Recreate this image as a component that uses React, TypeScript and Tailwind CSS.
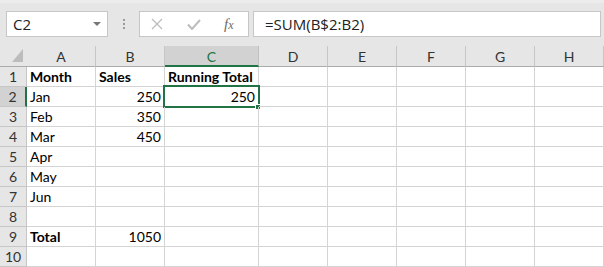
import { Fragment } from "react";

const COLS = ["A", "B", "C", "D", "E", "F", "G", "H"];

type Cell = { v: string; bold?: boolean; num?: boolean };

const ROWS: Record<number, Record<string, Cell>> = {
  1: {
    A: { v: "Month", bold: true },
    B: { v: "Sales", bold: true },
    C: { v: "Running Total", bold: true },
  },
  2: { A: { v: "Jan" }, B: { v: "250", num: true }, C: { v: "250", num: true } },
  3: { A: { v: "Feb" }, B: { v: "350", num: true } },
  4: { A: { v: "Mar" }, B: { v: "450", num: true } },
  5: { A: { v: "Apr" } },
  6: { A: { v: "May" } },
  7: { A: { v: "Jun" } },
  8: {},
  9: { A: { v: "Total", bold: true }, B: { v: "1050", num: true } },
  10: {},
};

function FormulaBar() {
  return (
    <div className="h-[46px] bg-[#e6e6e6] border-t-[3px] border-[#ececec]">
      <div className="flex items-center gap-0 pt-[8px] pl-[6px] pr-[3px]">
        <div className="flex h-[26px] w-[102px] items-center justify-between border border-[#c6c6c6] bg-white pl-[6px] pr-[6px] text-[15px] text-[#222]">
          <span>C2</span>
          <svg width="8" height="4" viewBox="0 0 8 4">
            <path d="M0 0h8L4 4z" fill="#777" />
          </svg>
        </div>
        <div className="flex w-[31px] flex-col items-center gap-[2px]">
          <span className="h-[2px] w-[2px] bg-[#9a9a9a]" />
          <span className="h-[2px] w-[2px] bg-[#9a9a9a]" />
          <span className="h-[2px] w-[2px] bg-[#9a9a9a]" />
        </div>
        <div className="flex h-[26px] w-[110px] items-center border border-[#c6c6c6] bg-white">
          <svg className="ml-[11px]" width="12" height="12" viewBox="0 0 12 12">
            <path d="M1 1l10 10M11 1L1 11" stroke="#bdbdbd" strokeWidth="1.3" />
          </svg>
          <svg className="ml-[24px]" width="14" height="11" viewBox="0 0 14 11">
            <path d="M1 5.5l4 4.5L13 1" stroke="#bdbdbd" strokeWidth="2" fill="none" />
          </svg>
          <span className="ml-[23px] font-['Liberation_Serif',serif] text-[15px] italic text-[#6b6b6b]">
            f<span className="text-[12px]">x</span>
          </span>
        </div>
        <div className="ml-[4px] flex h-[26px] flex-1 items-center border border-[#c6c6c6] bg-white pl-[11px] text-[15px] text-[#222]">
          =SUM(B$2:B2)
        </div>
      </div>
    </div>
  );
}

export default function App() {
  return (
    <div className="h-[267px] w-[604px] overflow-hidden bg-white font-['Lato',sans-serif] text-[14px] text-black">
      <div className="font-['Open_Sans',sans-serif]">
        <FormulaBar />
      </div>
      <div className="grid grid-cols-[27px_69px_69px_94px_69px_69px_69px_69px_69px] auto-rows-[20px] [grid-template-rows:21px]">
        <div className="relative border-b border-[#ababab] bg-[#e6e6e6]">
          <svg className="absolute left-[12px] top-[3px]" width="11" height="13" viewBox="0 0 11 13">
            <path d="M11 0v13H0z" fill="#bcbcbc" />
          </svg>
        </div>
        {COLS.map((c) => (
          <div
            key={c}
            className={
              c === "C"
                ? "flex items-center justify-center border-b-2 border-r border-b-[#217346] border-r-[#c0c0c0] bg-[#d2d2d2] pt-[2px] text-[#217346]"
                : "flex items-center justify-center border-b border-r border-b-[#ababab] border-r-[#c6c6c6] bg-[#e6e6e6] text-[#333]"
            }
          >
            {c}
          </div>
        ))}
        {Object.keys(ROWS).map((k) => {
          const r = Number(k);
          return (
            <Fragment key={r}>
              <div
                className={
                  r === 2
                    ? "flex items-center justify-center border-b border-r-2 border-b-[#c6c6c6] border-r-[#217346] bg-[#d2d2d2] text-[#333]"
                    : "flex items-center justify-center border-b border-r border-[#c6c6c6] bg-[#e6e6e6] text-[#333]"
                }
              >
                {r}
              </div>
              {COLS.map((c) => {
                const cell = ROWS[r][c];
                return (
                  <div
                    key={c}
                    className={
                      "relative flex items-center whitespace-nowrap border-b border-r border-[#d4d4d4] px-[3px] " +
                      (cell?.num ? "justify-end " : "") +
                      (cell?.bold ? "font-bold" : "")
                    }
                  >
                    {cell?.v}
                    {r === 2 && c === "C" && (
                      <>
                        <div className="absolute -left-[2px] -top-[2px] h-[23px] w-[97px] border-2 border-[#217346]" />
                        <div className="absolute -bottom-[4px] -right-[3px] h-[6px] w-[6px] border border-white bg-[#217346]" />
                      </>
                    )}
                  </div>
                );
              })}
            </Fragment>
          );
        })}
      </div>
    </div>
  );
}
